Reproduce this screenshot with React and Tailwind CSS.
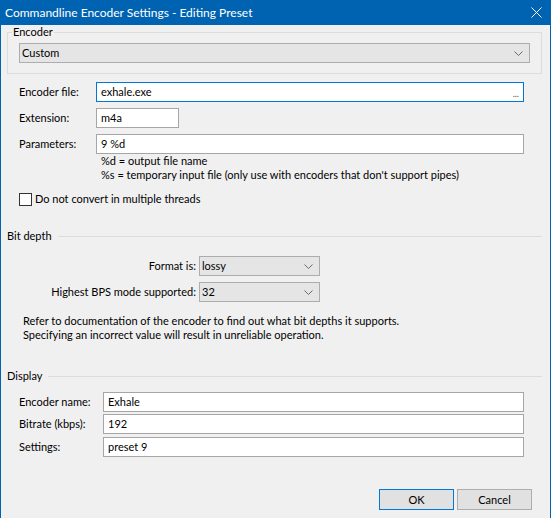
import React from "react";

const FONT = { fontFamily: 'Lato, "Noto Sans", sans-serif' };

function Chevron() {
  return (
    <svg width="9" height="5" viewBox="0 0 9 5" className="shrink-0">
      <polyline points="0.5,0.5 4.5,4.5 8.5,0.5" fill="none" stroke="#6a6a6a" strokeWidth="1" />
    </svg>
  );
}

function Combo({ value, className = "" }) {
  return (
    <div
      className={`flex items-center justify-between h-[20px] bg-[#e5e5e5] border border-[#adadad] pl-[2px] pr-[6px] ${className}`}
    >
      <span className="leading-[14px]">{value}</span>
      <Chevron />
    </div>
  );
}

function TextBox({ value, className = "", focused = false, children }) {
  return (
    <div
      className={`flex items-center justify-between h-[20px] bg-white border pl-[4px] pr-[4px] ${
        focused ? "border-[#0078d7]" : "border-[#a6a6a6]"
      } ${className}`}
    >
      <span className="leading-[14px]">{value}</span>
      {children}
    </div>
  );
}

function SectionHeader({ title }) {
  return (
    <div className="flex items-center h-[14px] ml-[6px] w-[535px]">
      <span className="leading-[14px] pr-[6px]">{title}</span>
      <div className="flex-1 h-px bg-[#dcdcdc]" />
    </div>
  );
}

export default function App() {
  return (
    <div
      className="w-[551px] h-[518px] bg-[#f0f0f0] border-x border-[#0063b1] text-[11px] text-black overflow-hidden whitespace-nowrap"
      style={FONT}
    >
      {/* caption bar */}
      <div className="h-[25px] bg-[#0063b1] flex items-center justify-between pl-[4px] pr-[8px] text-white">
        <span className="text-[12px] leading-[14px]">Commandline Encoder Settings - Editing Preset</span>
        <svg width="11" height="11" viewBox="0 0 11 11">
          <path d="M0.5 0.5 L10.5 10.5 M10.5 0.5 L0.5 10.5" stroke="#fff" strokeWidth="1" fill="none" />
        </svg>
      </div>

      {/* encoder group */}
      <fieldset className="ml-[6px] w-[535px] border border-[#dcdcdc] p-0">
        <legend className="ml-[4px] px-[1px] leading-[14px]">Encoder</legend>
        <div className="pt-[4px] pb-[10px] px-[11px]">
          <Combo value="Custom" />
        </div>
      </fieldset>

      {/* command line */}
      <div className="mt-[8px] flex items-center ml-[18px]">
        <span className="w-[77px] leading-[14px]">Encoder file:</span>
        <TextBox value="exhale.exe" focused className="w-[428px]">
          <span className="text-[9px] leading-[9px] text-[#555] self-end pb-[3px]">...</span>
        </TextBox>
      </div>
      <div className="mt-[6px] flex items-center ml-[18px]">
        <span className="w-[77px] leading-[14px]">Extension:</span>
        <TextBox value="m4a" className="w-[83px]" />
      </div>
      <div className="mt-[6px] flex items-center ml-[18px]">
        <span className="w-[77px] leading-[14px]">Parameters:</span>
        <TextBox value="9 %d" className="w-[428px]" />
      </div>
      <div className="ml-[100px] leading-[14px]">
        <div>%d = output file name</div>
        <div>%s = temporary input file (only use with encoders that don't support pipes)</div>
      </div>
      <label className="mt-[10px] ml-[18px] flex items-center gap-[3px] h-[14px]">
        <span className="w-[13px] h-[13px] bg-white border border-[#333333]" />
        <span className="leading-[14px]">Do not convert in multiple threads</span>
      </label>

      {/* bit depth */}
      <div className="mt-[23px]">
        <SectionHeader title="Bit depth" />
      </div>
      <div className="mt-[13px] flex items-center">
        <span className="w-[198px] text-right pr-[3px] leading-[14px]">Format is:</span>
        <Combo value="lossy" className="w-[121px]" />
      </div>
      <div className="mt-[6px] flex items-center">
        <span className="w-[198px] text-right pr-[3px] leading-[14px]">Highest BPS mode supported:</span>
        <Combo value="32" className="w-[121px]" />
      </div>
      <div className="mt-[12px] ml-[22px] leading-[14px]">
        <div>Refer to documentation of the encoder to find out what bit depths it supports.</div>
        <div>Specifying an incorrect value will result in unreliable operation.</div>
      </div>

      {/* display */}
      <div className="mt-[27px]">
        <SectionHeader title="Display" />
      </div>
      <div className="mt-[9px] flex items-center ml-[18px]">
        <span className="w-[84px] leading-[14px]">Encoder name:</span>
        <TextBox value="Exhale" className="w-[421px]" />
      </div>
      <div className="mt-[2px] flex items-center ml-[18px]">
        <span className="w-[84px] leading-[14px]">Bitrate (kbps):</span>
        <TextBox value="192" className="w-[421px]" />
      </div>
      <div className="mt-[3px] flex items-center ml-[18px]">
        <span className="w-[84px] leading-[14px]">Settings:</span>
        <TextBox value="preset 9" className="w-[421px]" />
      </div>

      {/* buttons */}
      <div className="mt-[32px] flex justify-end gap-[3px] pr-[18px]">
        <button className="w-[75px] h-[21px] bg-[#e1e1e1] border border-[#0078d7] leading-[14px]">OK</button>
        <button className="w-[75px] h-[21px] bg-[#e1e1e1] border border-[#adadad] leading-[14px]">Cancel</button>
      </div>
    </div>
  );
}
